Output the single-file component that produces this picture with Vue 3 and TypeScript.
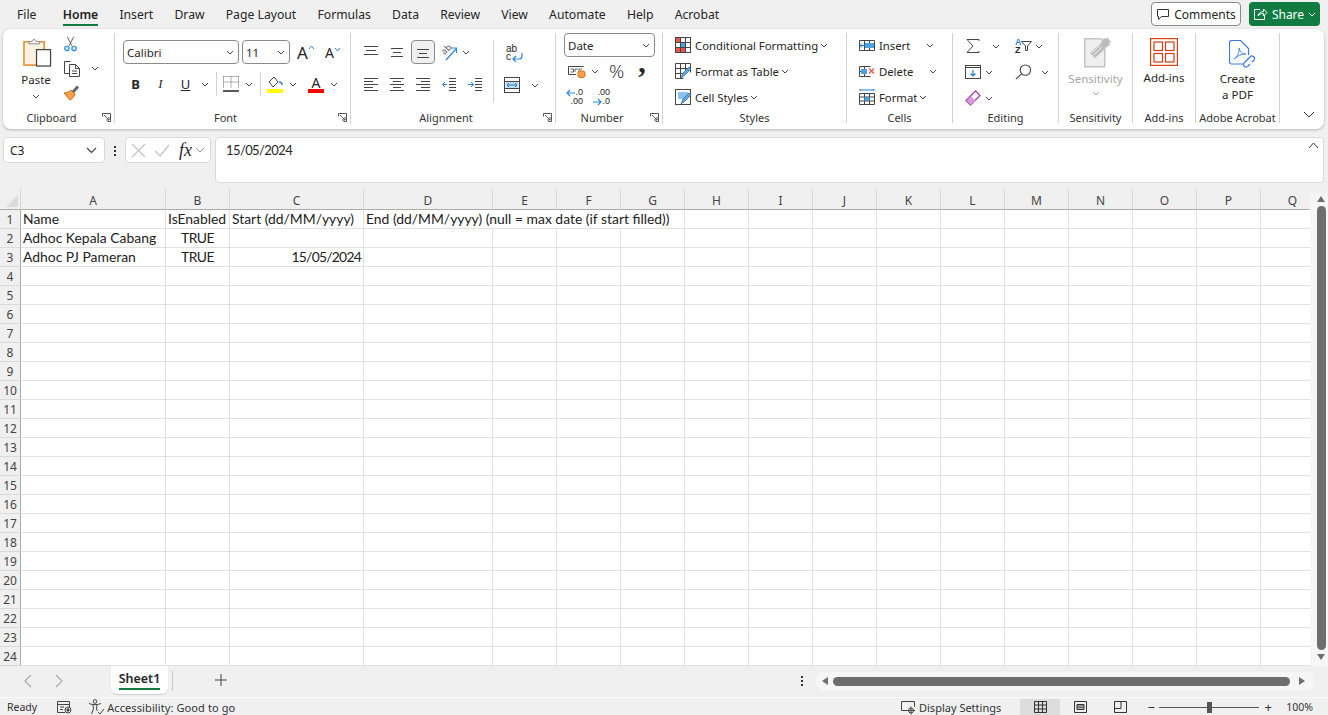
<script setup lang="ts">
const tabs = ["File", "Home", "Insert", "Draw", "Page Layout", "Formulas", "Data", "Review", "View", "Automate", "Help", "Acrobat"]

const columns = [
  { name: "A", width: 145 },
  { name: "B", width: 64 },
  { name: "C", width: 134 },
  { name: "D", width: 129 },
  ...["E", "F", "G", "H", "I", "J", "K", "L", "M", "N", "O", "P", "Q"].map((name) => ({ name, width: 64 })),
]

type Cell = { text: string; align?: "left" | "center" | "right"; span?: number }

const firstRows: Cell[][] = [
  [
    { text: "Name" },
    { text: "IsEnabled" },
    { text: "Start (dd/MM/yyyy)" },
    { text: "End (dd/MM/yyyy) (null = max date (if start filled))", span: 4 },
  ],
  [{ text: "Adhoc Kepala Cabang" }, { text: "TRUE", align: "center" }, { text: "" }, { text: "" }],
  [{ text: "Adhoc PJ Pameran" }, { text: "TRUE", align: "center" }, { text: "15/05/2024", align: "right" }, { text: "" }],
]

function rowCells(index: number): Cell[] {
  const given = firstRows[index] ?? []
  const used = given.reduce((sum, c) => sum + (c.span ?? 1), 0)
  return [...given, ...Array.from({ length: columns.length - used }, () => ({ text: "" }))]
}

const rows = Array.from({ length: 24 }, (_, i) => i)
const gridCols = ["21px", ...columns.map((c) => c.width + "px")].join(" ")
</script>

<template>
  <div class="app">
    <header class="tabbar">
      <nav class="tabs">
        <span v-for="t in tabs" :key="t" class="tab" :class="{ active: t === 'Home' }">{{ t }}</span>
      </nav>
      <div class="actions">
        <button class="comments">
          <svg width="14" height="14" viewBox="0 0 14 14" fill="none" stroke="#333"><path d="M1.5 2.5h11v7h-7l-3 3v-3h-1z" /></svg>
          Comments
        </button>
        <button class="share">
          <svg width="15" height="14" viewBox="0 0 15 14" fill="none" stroke="#fff"><path d="M7 2.5H1.5v10h10V8M5 9c.5-3 3-4.500 5.500-4.500V2l3.500 3.500L10.500 9V6.500C8 6.500 6 7.500 5 9z" /></svg>
          Share
          <svg class="chev white" viewBox="0 0 8 5"><path d="M1 1l3 3 3-3" /></svg>
        </button>
      </div>
    </header>

    <section class="ribbon">
      <!-- Clipboard -->
      <div class="group" style="width: 112px">
        <div class="body clip">
          <div class="paste">
            <svg class="paste-icon" width="29" height="29" viewBox="0 0 30 30">
              <rect x="1" y="4" width="21" height="24" fill="#fdf3e0" stroke="#e08a1e" stroke-width="1.500" />
              <path d="M6 6V3.500h3.500L11.500 1l2 2.500H17V6z" fill="#fff" stroke="#8a8a8a" />
              <rect x="14" y="12" width="14.500" height="17" fill="#fff" stroke="#444" stroke-width="1.300" />
            </svg>
            <span class="big-text">Paste</span>
            <svg class="chev" viewBox="0 0 8 5"><path d="M1 1l3 3 3-3" /></svg>
          </div>
          <div class="clip-col">
            <div class="row26">
              <svg width="15" height="16" viewBox="0 0 16 18" fill="none"><path d="M4.500 1l5 10M11.500 1l-5 10" stroke="#555" /><circle cx="4" cy="14" r="2.500" fill="#cfe6f8" stroke="#2b88d8" stroke-width="1.300" /><circle cx="12" cy="14" r="2.500" fill="#cfe6f8" stroke="#2b88d8" stroke-width="1.300" /></svg>
            </div>
            <div class="row26">
              <svg width="18" height="17" viewBox="0 0 18 17" fill="none" stroke="#444"><path d="M6.500 13.500h-5v-12h6" /><path d="M6.500 4.500h6l4 4v8h-10zM12.500 4.500v4h4M9 11h5M9 13.500h5" fill="#fff" /></svg>
              <svg class="chev chev-copy" viewBox="0 0 8 5"><path d="M1 1l3 3 3-3" /></svg>
            </div>
            <div class="row26">
              <svg width="18" height="16" viewBox="0 0 18 16"><path d="M1 8l6 7c2-1 4-3 5-6L8 5C6 7 3 8 1 8z" fill="#f6a04a" stroke="#d06e14" /><path d="M10 7l5-5.500" stroke="#666" stroke-width="3" /></svg>
            </div>
          </div>
        </div>
        <div class="label"><i /><span>Clipboard</span><svg class="launch" viewBox="0 0 9 9"><path d="M.5 3.500v-3h8v8h-3M2 2l5 5M7 4v3H4" /></svg></div>
      </div>

      <!-- Font -->
      <div class="group" style="width: 236px">
        <div class="body font">
          <div class="font-row">
            <div class="combo combo-font"><span>Calibri</span><svg class="chev" viewBox="0 0 8 5"><path d="M1 1l3 3 3-3" /></svg></div>
            <div class="combo combo-size"><span>11</span><svg class="chev" viewBox="0 0 8 5"><path d="M1 1l3 3 3-3" /></svg></div>
            <span class="grow">A<svg class="caret" viewBox="0 0 7 5"><path d="M1 4l2.500-3L6 4" /></svg></span>
            <span class="shrink">A<svg class="caret" viewBox="0 0 7 5"><path d="M1 1l2.500 3L6 1" /></svg></span>
          </div>
          <div class="font-row second">
            <b class="btn-b">B</b>
            <i class="btn-i">I</i>
            <u class="btn-u">U</u>
            <svg class="chev first" viewBox="0 0 8 5"><path d="M1 1l3 3 3-3" /></svg>
            <span class="vsep" />
            <svg width="16" height="16" viewBox="0 0 16 16" fill="none"><path d="M.5 .5h15M.5 .5v11M15.500 .5v11M.5 6h15M8 .5v11" stroke="#666" stroke-dasharray="1 1" /><path d="M0 15h16" stroke="#222" stroke-width="1.500" /></svg>
            <svg class="chev" viewBox="0 0 8 5"><path d="M1 1l3 3 3-3" /></svg>
            <span class="vsep" />
            <span class="color-btn">
              <svg width="16" height="13" viewBox="0 0 16 13" fill="none"><path d="M7 1L2 6l4 5 5-5z" stroke="#444" /><path d="M12 6c2 0 3 1 3 3" stroke="#2b88d8" stroke-width="1.500" /></svg>
              <span class="swatch yellow" />
            </span>
            <svg class="chev" viewBox="0 0 8 5"><path d="M1 1l3 3 3-3" /></svg>
            <span class="color-btn letter">A<span class="swatch red" /></span>
            <svg class="chev" viewBox="0 0 8 5"><path d="M1 1l3 3 3-3" /></svg>
          </div>
        </div>
        <div class="label"><i /><span>Font</span><svg class="launch" viewBox="0 0 9 9"><path d="M.5 3.500v-3h8v8h-3M2 2l5 5M7 4v3H4" /></svg></div>
      </div>

      <!-- Alignment -->
      <div class="group" style="width: 205px">
        <div class="body align">
          <div class="align-main">
            <div class="align-row top">
              <svg class="al" viewBox="0 0 14 14"><path d="M0 1.500h14M2 5.500h10M0 9.500h14" /></svg>
              <svg class="al" viewBox="0 0 14 14"><path d="M1 3.500h12M3 7.500h8M1 11.500h12" /></svg>
              <span class="pressed"><svg class="al" viewBox="0 0 14 14"><path d="M1 4.500h12M3 8.500h8M1 12.500h12" /></svg></span>
              <svg class="orient-icon" width="17" height="17" viewBox="0 0 17 17" fill="none"><text x="1" y="9" transform="rotate(-45 5 7)" class="orient">ab</text><path d="M5 16L15 5M10 4h5.500v5" stroke="#2b88d8" stroke-width="1.200" /></svg>
              <svg class="chev orient-chev" viewBox="0 0 8 5"><path d="M1 1l3 3 3-3" /></svg>
            </div>
            <div class="align-row">
              <svg class="al" viewBox="0 0 14 14"><path d="M0 1.500h14M0 4.500h9M0 7.500h14M0 10.500h9M0 13.500h14" /></svg>
              <svg class="al" viewBox="0 0 14 14"><path d="M0 1.500h14M3 4.500h8M0 7.500h14M3 10.500h8M0 13.500h14" /></svg>
              <svg class="al" viewBox="0 0 14 14"><path d="M0 1.500h14M5 4.500h9M0 7.500h14M5 10.500h9M0 13.500h14" /></svg>
              <svg class="al" viewBox="0 0 14 14"><path d="M7 1.500h7M7 4.500h7M7 7.500h7M7 10.500h7M7 13.500h7" /><path class="blue" d="M0 7.500h5M3 5L.5 7.500 3 10" /></svg>
              <svg class="al" viewBox="0 0 14 14"><path d="M7 1.500h7M7 4.500h7M7 7.500h7M7 10.500h7M7 13.500h7" /><path class="blue" d="M0 7.500h5M3 5l2.500 2.500L3 10" /></svg>
            </div>
          </div>
          <span class="vsep tall" />
          <div class="wrap-col">
            <div class="wrap-row">
              <span class="wrap-icon">
                <span class="wrap-ab">ab</span>
                <span class="wrap-c">c<svg width="11" height="9" viewBox="0 0 11 9" fill="none" stroke="#2b88d8" stroke-width="1.200"><path d="M10 0v3c0 2-1 3-3 3H1M4 3L1 6l3 3" /></svg></span>
              </span>
            </div>
            <div class="wrap-row merge">
              <svg width="16" height="16" viewBox="0 0 16 16" fill="none"><rect x=".5" y=".5" width="15" height="15" stroke="#444" /><rect x="1.500" y="4.500" width="13" height="7" fill="#bfe0f7" /><path d="M.5 4.500h15M.5 11.500h15" stroke="#444" /><path d="M3 8h10M5 6L3 8l2 2M11 6l2 2-2 2" stroke="#1f7fd0" /></svg>
              <svg class="chev" viewBox="0 0 8 5"><path d="M1 1l3 3 3-3" /></svg>
            </div>
          </div>
        </div>
        <div class="label"><i /><span>Alignment</span><svg class="launch" viewBox="0 0 9 9"><path d="M.5 3.500v-3h8v8h-3M2 2l5 5M7 4v3H4" /></svg></div>
      </div>

      <!-- Number -->
      <div class="group" style="width: 107px">
        <div class="body number">
          <div class="combo combo-num"><span>Date</span><svg class="chev" viewBox="0 0 8 5"><path d="M1 1l3 3 3-3" /></svg></div>
          <div class="num-row">
            <svg width="18" height="14" viewBox="0 0 18 14" fill="none"><path d="M8 10.500H.5v-8h15" stroke="#444" /><path d="M2.500 5h3v3h-3M7 8V5h3M11 8V5h3" stroke="#444" stroke-width=".8" /><rect x="10" y="7" width="7" height="6.500" rx="2" fill="#f5a04a" stroke="#d06e14" /></svg>
            <svg class="chev" viewBox="0 0 8 5"><path d="M1 1l3 3 3-3" /></svg>
            <span class="pct">%</span>
            <span class="comma">,</span>
          </div>
          <div class="num-row dec">
            <span class="dec-icon"><span><svg width="9" height="8" viewBox="0 0 9 8" fill="none" stroke="#2b88d8" stroke-width="1.200"><path d="M9 4H1M4 1L1 4l3 3" /></svg>.0</span><span class="dec-low">.00</span></span>
            <span class="dec-icon"><span class="dec-low">.00</span><span><svg width="9" height="8" viewBox="0 0 9 8" fill="none" stroke="#2b88d8" stroke-width="1.200"><path d="M0 4h8M5 1l3 3-3 3" /></svg>.0</span></span>
          </div>
        </div>
        <div class="label"><i /><span>Number</span><svg class="launch" viewBox="0 0 9 9"><path d="M.5 3.500v-3h8v8h-3M2 2l5 5M7 4v3H4" /></svg></div>
      </div>

      <!-- Styles -->
      <div class="group" style="width: 184px">
        <div class="body stack styles">
          <div class="item">
            <svg class="i16" viewBox="0 0 16 16" fill="none"><rect x=".5" y=".5" width="15" height="15" stroke="#444" /><rect x="1" y="1" width="5" height="4.500" fill="#ef5350" /><rect x="1" y="10.500" width="10" height="4.500" fill="#ef5350" /><rect x="5.500" y="5.500" width="5" height="5" fill="#4aa3e0" /><path d="M5.500 .5v15M10.500 .5v15M.5 5.500h15M.5 10.500h15" stroke="#444" /></svg>
            <span>Conditional Formatting</span><svg class="chev" viewBox="0 0 8 5"><path d="M1 1l3 3 3-3" /></svg>
          </div>
          <div class="item">
            <svg class="i16" viewBox="0 0 16 16" fill="none"><path d="M.5 .5h15v9M.5 .5v15h8M.5 5.500h15M5.500 .5v15M10.500 .5v7M.5 10.500h7" stroke="#444" /><path d="M6 15l2-5 6-6 2 2-6 6z" fill="#5ea9e6" stroke="#3a6ea5" stroke-width=".8" /></svg>
            <span>Format as Table</span><svg class="chev" viewBox="0 0 8 5"><path d="M1 1l3 3 3-3" /></svg>
          </div>
          <div class="item">
            <svg class="i16" viewBox="0 0 16 16" fill="none"><rect x=".5" y=".5" width="15" height="15" stroke="#444" /><path d="M3 3h10v7H3z" fill="#8cc3ee" /><path d="M6 15l2-5 6-6 2 2-6 6z" fill="#5ea9e6" stroke="#3a6ea5" stroke-width=".8" /></svg>
            <span>Cell Styles</span><svg class="chev" viewBox="0 0 8 5"><path d="M1 1l3 3 3-3" /></svg>
          </div>
        </div>
        <div class="label center"><span>Styles</span></div>
      </div>

      <!-- Cells -->
      <div class="group" style="width: 106px">
        <div class="body stack cells">
          <div class="item">
            <svg class="i16" viewBox="0 0 16 16" fill="none"><path d="M.5 3.500h15v10H.5zM.5 8.500h15M5.500 3.500v10M10.500 3.500v10" stroke="#444" /><rect x="6" y="6" width="9" height="5" fill="#4aa3e0" /><path d="M6 8.500H1M3 6.500l-2 2 2 2" stroke="#1f7fd0" /></svg>
            <span>Insert</span><svg class="chev chev-far" viewBox="0 0 8 5"><path d="M1 1l3 3 3-3" /></svg>
          </div>
          <div class="item">
            <svg class="i16" viewBox="0 0 16 16" fill="none"><path d="M.5 3.500h11M.5 13.500h11M.5 3.500v10M.5 8.500h4M5.500 3.500v10" stroke="#444" /><rect x="2" y="6" width="6" height="5" fill="#4aa3e0" /><path d="M10 5.500l5 5M15 5.500l-5 5" stroke="#e8534f" stroke-width="1.300" /></svg>
            <span>Delete</span><svg class="chev chev-far" viewBox="0 0 8 5"><path d="M1 1l3 3 3-3" /></svg>
          </div>
          <div class="item">
            <svg class="i16" viewBox="0 0 16 16" fill="none"><path d="M.5 4.500h15v11H.5zM5.500 4.500v11M10.500 4.500v11M.5 8h15M.5 12h15" stroke="#444" /><rect x="5.500" y="8" width="5" height="4" fill="#4aa3e0" /><path d="M1 1h14M1 0v2M15 0v2" stroke="#1f7fd0" /></svg>
            <span>Format</span><svg class="chev" viewBox="0 0 8 5"><path d="M1 1l3 3 3-3" /></svg>
          </div>
        </div>
        <div class="label center"><span>Cells</span></div>
      </div>

      <!-- Editing -->
      <div class="group" style="width: 106px">
        <div class="body editing">
          <div class="edit-col">
            <div class="edit-row">
              <svg class="i16" viewBox="0 0 16 16" fill="none" stroke="#444"><path d="M14 3V1.500H2L8 8l-6 6.500h12V13" /></svg>
              <svg class="chev sum-chev" viewBox="0 0 8 5"><path d="M1 1l3 3 3-3" /></svg>
            </div>
            <div class="edit-row">
              <svg class="i16" viewBox="0 0 16 16" fill="none"><rect x=".5" y="1.500" width="15" height="13" stroke="#444" /><path d="M.5 3.500h15" stroke="#444" /><path d="M8 6v6M5.500 9.500L8 12l2.500-2.500" stroke="#1f7fd0" stroke-width="1.200" /></svg>
              <svg class="chev" viewBox="0 0 8 5"><path d="M1 1l3 3 3-3" /></svg>
            </div>
            <div class="edit-row">
              <svg class="i16" viewBox="0 0 16 16"><path d="M1 10.500L10.500 1 15 5.500 5.500 15z" fill="#fff" stroke="#a144a8" stroke-width="1.300" /><path d="M1.500 10.500L6 6l4.500 4.500-5 4.500z" fill="#d59ad9" /></svg>
              <svg class="chev" viewBox="0 0 8 5"><path d="M1 1l3 3 3-3" /></svg>
            </div>
          </div>
          <div class="edit-col second">
            <div class="edit-row sort">
              <span class="sort-icon"><span class="sort-a">A</span><span>Z</span></span>
              <svg width="11" height="10" viewBox="0 0 11 10" fill="none" stroke="#444"><path d="M.5 .5h10L6.500 5v4.500h-2V5z" /></svg>
              <svg class="chev" viewBox="0 0 8 5"><path d="M1 1l3 3 3-3" /></svg>
            </div>
            <div class="edit-row">
              <svg width="17" height="16" viewBox="0 0 18 17" fill="none" stroke="#444" stroke-width="1.200"><circle cx="11" cy="6.500" r="5.500" /><path d="M7 10.500L1 16" /></svg>
              <svg class="chev" viewBox="0 0 8 5"><path d="M1 1l3 3 3-3" /></svg>
            </div>
          </div>
        </div>
        <div class="label center"><span>Editing</span></div>
      </div>

      <!-- Sensitivity -->
      <div class="group" style="width: 74px">
        <div class="body big muted">
          <svg class="sens-icon" width="28" height="32" viewBox="0 0 28 32"><path d="M.75 2.750h16l4 4v24h-20z" fill="#efefef" stroke="#c4c4c4" stroke-width="1.500" /><path d="M6 17L17 7l5 5-11 10z" fill="#bdbdbd" /><path d="M8 17l8-8M10 19l8-8" stroke="#efefef" /><path d="M17 7l3-5 2 1 1-2 4 5-2 1 1 2-5 3z" fill="#bdbdbd" /></svg>
          <span class="big-text">Sensitivity</span>
          <svg class="chev" viewBox="0 0 8 5"><path d="M1 1l3 3 3-3" /></svg>
        </div>
        <div class="label center"><span>Sensitivity</span></div>
      </div>

      <!-- Add-ins -->
      <div class="group" style="width: 63px">
        <div class="body big addins">
          <svg width="28" height="28" viewBox="0 0 28 28" fill="none" stroke="#d13e12" stroke-width="1.200"><rect x=".6" y=".6" width="26.800" height="26.800" /><rect x="4" y="4" width="8.500" height="8.500" /><rect x="15.500" y="4" width="8.500" height="8.500" /><rect x="4" y="15.500" width="8.500" height="8.500" /><rect x="15.500" y="15.500" width="8.500" height="8.500" /></svg>
          <span class="big-text">Add-ins</span>
        </div>
        <div class="label center"><span>Add-ins</span></div>
      </div>

      <!-- Adobe Acrobat -->
      <div class="group" style="width: 84px">
        <div class="body big acrobat">
          <svg width="26" height="28" viewBox="0 0 26 28" fill="none" stroke="#3b78e7" stroke-width="1.200"><path d="M14 24H2.500a2 2 0 0 1-2-2V2.500a2 2 0 0 1 2-2h9l8 8V15" /><path d="M5 19c3-1 6-8 5-11 1 4 3 6 7 6-3 0-8 1-12 5z" stroke-width=".9" /><path d="M15 23l6-6a2.500 2.500 0 0 1 4 3l-2 2M19 19l-4 4a2.500 2.500 0 0 0 4 3l2-2" /></svg>
          <span class="big-text create">Create<br />a PDF</span>
        </div>
        <div class="label center"><span>Adobe Acrobat</span></div>
      </div>

      <div class="collapse">
        <svg width="12" height="7" viewBox="0 0 12 7" fill="none" stroke="#333"><path d="M1 1l5 5 5-5" /></svg>
      </div>
    </section>

    <section class="formula">
      <div class="namebox"><span>C3</span><svg width="11" height="7" viewBox="0 0 11 7" fill="none" stroke="#444" stroke-width="1.200"><path d="M1 1l4.500 4.500L10 1" /></svg></div>
      <div class="dots"><span /><span /><span /></div>
      <div class="fx-btns">
        <svg width="15" height="15" viewBox="0 0 15 15" fill="none" stroke="#c4c4c4" stroke-width="1.200"><path d="M1 1l13 13M14 1L1 14" /></svg>
        <svg width="16" height="13" viewBox="0 0 16 13" fill="none" stroke="#c4c4c4" stroke-width="1.200"><path d="M1 7l5 5L15 1" /></svg>
        <em class="fx">fx</em>
        <svg width="10" height="6" viewBox="0 0 10 6" fill="none" stroke="#999"><path d="M1 1l4 4 4-4" /></svg>
      </div>
      <div class="formula-input">
        <span class="formula-value">15/05/2024</span>
        <svg width="11" height="7" viewBox="0 0 11 7" fill="none" stroke="#333"><path d="M1 6l4.500-5L10 6" /></svg>
      </div>
    </section>

    <section class="sheet">
      <div class="grid-clip">
        <div class="grid" :style="{ gridTemplateColumns: gridCols }">
          <div class="corner"><span class="tri" /></div>
          <div v-for="c in columns" :key="c.name" class="col-head">{{ c.name }}</div>
          <template v-for="r in rows" :key="r">
            <div class="row-head">{{ r + 1 }}</div>
            <div
              v-for="(cell, ci) in rowCells(r)"
              :key="ci"
              class="cell"
              :class="cell.align"
              :style="cell.span ? { gridColumn: 'span ' + cell.span } : undefined"
            >{{ cell.text }}</div>
          </template>
        </div>
      </div>
      <div class="vscroll">
        <span class="arrow up" />
        <span class="vthumb" />
        <span class="arrow down" />
      </div>
    </section>

    <section class="sheetbar">
      <div class="nav">
        <svg width="9" height="14" viewBox="0 0 9 14" fill="none" stroke="#aaa" stroke-width="1.200"><path d="M8 1L2 7l6 6" /></svg>
        <svg width="9" height="14" viewBox="0 0 9 14" fill="none" stroke="#aaa" stroke-width="1.200"><path d="M1 1l6 6-6 6" /></svg>
      </div>
      <div class="sheet-tab"><span>Sheet1</span></div>
      <span class="tab-sep" />
      <svg class="plus" width="12" height="12" viewBox="0 0 12 12" stroke="#444"><path d="M6 0v12M0 6h12" /></svg>
      <div class="dots bar-dots"><span /><span /><span /></div>
      <div class="hscroll">
        <span class="arrow left" />
        <span class="hthumb" />
        <span class="arrow right" />
      </div>
    </section>

    <footer class="status">
      <span class="ready">Ready</span>
      <svg class="macro" width="15" height="14" viewBox="0 0 15 14" fill="none" stroke="#444"><path d="M8 12.500H.5v-11h12V7M.5 4.500h12M3 7h4M3 9.500h3" /><circle cx="11" cy="10" r="3" /><circle cx="11" cy="10" r="1.200" fill="#444" /></svg>
      <svg class="access" width="17" height="16" viewBox="0 0 17 16" fill="none" stroke="#444"><circle cx="7" cy="2.500" r="1.800" /><path d="M1 4.500c3 1.500 9 1.500 12 0M5 6l.5 4-2 5M9 6l-.5 4 1 2M10 13l2 2 4-5" /></svg>
      <span class="access-text">Accessibility: Good to go</span>
      <div class="status-right">
        <svg width="15" height="15" viewBox="0 0 15 15" fill="none" stroke="#444"><path d="M6 10.500H.5v-9h13V7" /><circle cx="10" cy="10.500" r="2.500" /><path d="M10 6.500v8M6 10.500h8" /></svg>
        <span class="display">Display Settings</span>
        <span class="view active">
          <svg width="13" height="12" viewBox="0 0 13 12" fill="none" stroke="#333"><path d="M.5 .5h12v11H.5zM.5 4h12M.5 8h12M4.500 .5v11M8.500 .5v11" /></svg>
        </span>
        <span class="view">
          <svg width="13" height="12" viewBox="0 0 13 12" fill="none" stroke="#333"><path d="M.5 .5h12v11H.5zM3 3.500h7v5H3zM3 5h7M3 6.800h7" /></svg>
        </span>
        <span class="view">
          <svg width="13" height="12" viewBox="0 0 13 12" fill="none" stroke="#333"><path d="M.5 .5h12v11H.5zM.5 7.500h6.500V.5" /></svg>
        </span>
        <span class="zoom-sign">−</span>
        <span class="slider"><span class="knob" /></span>
        <span class="zoom-sign plus-sign">+</span>
        <span class="pct-text">100%</span>
      </div>
    </footer>
  </div>
</template>

<style>
html,
body {
  margin: 0;
  overflow: hidden;
}
</style>

<style scoped>
.app {
  width: 1328px;
  height: 715px;
  background: #f0f0f0;
  color: #262626;
  font-family: "Noto Sans", "Open Sans", sans-serif;
  font-size: 11.5px;
  display: flex;
  flex-direction: column;
  overflow: hidden;
}
svg {
  flex: none;
  display: block;
}
.chev {
  width: 8px;
  height: 5px;
  fill: none;
  stroke: #444;
}
.chev.white {
  stroke: #fff;
}

/* tab bar */
.tabbar {
  height: 29px;
  display: flex;
  justify-content: space-between;
  flex: none;
}
.tabs {
  display: flex;
  padding-left: 17px;
  gap: 21.2px;
  align-items: center;
  font-size: 12.2px;
  height: 29px;
}
.tab {
  position: relative;
  line-height: 29px;
}
.tab:first-child {
  margin-right: 5px;
}
.tab.active {
  font-weight: 600;
  color: #222;
}
.tab.active::after {
  content: "";
  position: absolute;
  left: 0;
  right: 0;
  bottom: 3px;
  height: 2px;
  background: #107c41;
}
.actions {
  display: flex;
  padding: 2px 8px 0 0;
  gap: 8px;
}
.comments,
.share {
  height: 24px;
  font: inherit;
  font-size: 12px;
  display: flex;
  align-items: center;
  justify-content: center;
  border-radius: 4px;
  gap: 4px;
}
.comments {
  width: 90px;
  background: #fff;
  border: 1px solid #8a8a8a;
  color: #262626;
  padding: 0;
}
.share {
  width: 71px;
  background: #107c41;
  border: 0;
  color: #fff;
  padding: 0;
}

/* ribbon */
.ribbon {
  height: 100px;
  margin: 0 4px 0 3px;
  background: #fff;
  border-radius: 8px;
  box-shadow: 0 1px 3px rgba(0, 0, 0, 0.25);
  display: flex;
  flex: none;
  padding-top: 4px;
  box-sizing: border-box;
}
.group {
  height: 90px;
  flex: none;
  box-sizing: border-box;
  border-right: 1px solid #d2d2d2;
  display: flex;
  flex-direction: column;
}
.body {
  flex: 1;
  min-height: 0;
}
.label {
  height: 18px;
  box-sizing: border-box;
  padding: 7px 14px 0 0;
  display: grid;
  grid-template-columns: 1fr auto 1fr;
  align-items: center;
  flex: none;
  font-size: 11px;
  line-height: 11px;
  color: #333;
}
.label.center {
  display: flex;
  justify-content: center;
  padding-right: 0;
}
.label i {
  display: block;
}
.launch {
  width: 9px;
  height: 9px;
  justify-self: end;
  margin-right: -11px;
  fill: none;
  stroke: #555;
}
.big-text {
  font-size: 11.5px;
}
.stack {
  display: flex;
  flex-direction: column;
  padding-left: 12px;
  margin-top: -1px;
}
.item {
  height: 26px;
  display: flex;
  align-items: center;
  gap: 4px;
  font-size: 11.3px;
  flex: none;
}
.item > .chev {
  margin-left: -2px;
}
.item > .chev-far {
  margin-left: 12px;
}
.i16 {
  width: 16px;
  height: 16px;
}

/* clipboard */
.clip {
  display: flex;
  padding-left: 18px;
}
.paste {
  width: 30px;
  display: flex;
  flex-direction: column;
  align-items: center;
  padding-top: 5px;
}
.paste-icon {
  margin-left: 3px;
}
.paste .big-text {
  margin-top: 5px;
  line-height: 16px;
}
.paste .chev {
  margin-top: 6px;
}
.clip-col {
  margin: -1px 0 0 12px;
  display: flex;
  flex-direction: column;
}
.row26 {
  height: 26px;
  display: flex;
  align-items: center;
}
.chev-copy {
  margin-left: 10px;
}

/* font */
.font {
  padding-left: 8px;
}
.font-row {
  display: flex;
  align-items: center;
  height: 24px;
  margin-top: 7px;
}
.font-row.second {
  margin-top: 8px;
}
.combo {
  box-sizing: border-box;
  height: 24px;
  border: 1px solid #8a8a8a;
  border-radius: 4px;
  display: flex;
  align-items: center;
  justify-content: space-between;
  padding: 0 4px 0 3px;
  font-size: 11.5px;
}
.combo-font {
  width: 116px;
}
.combo-size {
  width: 48px;
  margin-left: 3px;
}
.grow {
  font-size: 17px;
  margin-left: 7px;
  display: flex;
  width: 28px;
}
.shrink {
  font-size: 14px;
  display: flex;
  width: 17px;
}
.caret {
  width: 7px;
  height: 5px;
  fill: none;
  stroke: #2b88d8;
  margin-top: 4px;
}
.btn-b,
.btn-i,
.btn-u {
  font-size: 13px;
  width: 25px;
  text-align: center;
}
.btn-i {
  font-family: "Liberation Serif", serif;
}
.second .chev {
  margin: 0 7px 0 6px;
}
.second .chev.first {
  margin-left: 3px;
}
.vsep {
  width: 1px;
  height: 24px;
  background: #d2d2d2;
  margin: 0 6px 0 0;
  flex: none;
}
.color-btn {
  width: 16px;
  display: flex;
  flex-direction: column;
  align-items: center;
}
.color-btn.letter {
  font-size: 14px;
  line-height: 13px;
  margin-left: 4px;
}
.swatch {
  width: 16px;
  height: 4px;
  display: block;
}
.yellow {
  background: #ffff00;
}
.red {
  background: #ff0000;
}

/* alignment */
.align {
  display: flex;
  padding-left: 13px;
}
.align-main {
  width: 129px;
}
.align-row {
  display: flex;
  align-items: center;
  gap: 12px;
  height: 24px;
  margin-top: 8px;
}
.align-row.top {
  margin-top: 7px;
}
.al {
  width: 14px;
  height: 14px;
  fill: none;
  stroke: #444;
}
.al .blue {
  stroke: #2b88d8;
}
.pressed {
  width: 24px;
  height: 24px;
  box-sizing: border-box;
  border: 1px solid #8a8a8a;
  border-radius: 4px;
  background: #f0f0f0;
  display: flex;
  align-items: center;
  justify-content: center;
  margin: 0 -6px 0 -5px;
}
.orient-icon {
  overflow: visible;
}
.orient {
  font-size: 9px;
  fill: #555;
  font-family: "Noto Sans", sans-serif;
}
.orient-chev {
  margin-left: -8px;
}
.vsep.tall {
  height: 62px;
  margin: 7px 0 0 0;
}
.wrap-col {
  padding-left: 10px;
}
.wrap-row {
  display: flex;
  align-items: center;
  height: 30px;
  margin-top: 5px;
}
.wrap-row.merge {
  gap: 11px;
  margin-top: 2px;
}
.wrap-icon {
  display: flex;
  flex-direction: column;
  font-family: "Liberation Sans", sans-serif;
  font-size: 10px;
  line-height: 8px;
  padding-left: 2px;
}
.wrap-c {
  display: flex;
  align-items: center;
  gap: 1px;
}

/* number */
.number {
  padding-left: 8px;
}
.combo-num {
  width: 91px;
}
.num-row {
  display: flex;
  align-items: center;
  height: 26px;
  margin-top: 1px;
  padding-left: 4px;
}
.num-row .chev {
  margin-left: 5px;
}
.pct {
  font-family: "Open Sans", sans-serif;
  font-weight: 300;
  font-size: 19px;
  margin-left: 10px;
}
.comma {
  font-family: "Liberation Serif", serif;
  font-size: 30px;
  line-height: 12px;
  font-weight: 700;
  margin: -18px 0 0 14px;
}
.num-row.dec {
  margin-top: 0;
  gap: 11px;
  padding-left: 3px;
}
.dec-icon {
  display: flex;
  flex-direction: column;
  font-family: "Liberation Sans", sans-serif;
  font-size: 9px;
  line-height: 9px;
  align-items: flex-end;
  width: 16px;
}
.dec-icon span {
  display: flex;
  align-items: center;
}

/* editing */
.editing {
  display: flex;
  padding-left: 12px;
}
.edit-col {
  width: 50px;
}
.edit-col.second {
  width: 36px;
}
.edit-row {
  display: flex;
  align-items: center;
  height: 26px;
  gap: 3px;
}
.edit-col:first-child .edit-row {
  gap: 4px;
}
.sum-chev {
  margin-left: 7px;
}
.sort {
  gap: 0;
}
.sort .chev {
  margin-left: 3px;
}
.sort-icon {
  width: 6px;
  display: flex;
  flex-direction: column;
  font-family: "Liberation Sans", sans-serif;
  font-size: 9px;
  line-height: 8px;
  font-weight: 700;
}
.sort-a {
  color: #2b88d8;
}

/* big buttons */
.big {
  display: flex;
  flex-direction: column;
  align-items: center;
  padding-top: 3px;
}
.big .big-text {
  margin-top: 3px;
  line-height: 16px;
  text-align: center;
}
.big .chev {
  margin-top: 4px;
}
.muted {
  color: #a6a6a6;
}
.muted .chev {
  stroke: #a6a6a6;
}
.sens-icon {
  margin-left: 5px;
}
.addins {
  padding-top: 5px;
}
.addins .big-text {
  margin-top: 4px;
}
.acrobat {
  padding-top: 7px;
}
.acrobat svg {
  margin-left: 8px;
}
.collapse {
  flex: 1;
  display: flex;
  justify-content: flex-end;
  align-items: flex-end;
  padding: 0 9px 11px 0;
}

/* formula bar */
.formula {
  height: 46px;
  margin-top: 8px;
  display: flex;
  flex: none;
  padding: 0 4px 0 3px;
}
.namebox {
  width: 102px;
  height: 26px;
  box-sizing: border-box;
  background: #fff;
  border: 1px solid #d9d9d9;
  border-radius: 4px;
  display: flex;
  align-items: center;
  justify-content: space-between;
  padding: 0 7px 0 6px;
  font-size: 12px;
}
.dots {
  display: flex;
  flex-direction: column;
  gap: 2px;
  width: 2px;
}
.dots span {
  width: 2px;
  height: 2px;
  background: #333;
}
.formula > .dots {
  margin: 9px 9px 0 9px;
}
.fx-btns {
  width: 86px;
  height: 26px;
  box-sizing: border-box;
  background: #fff;
  border: 1px solid #d9d9d9;
  border-radius: 4px;
  display: flex;
  align-items: center;
  padding-left: 5px;
  gap: 8px;
}
.fx {
  font-family: "Liberation Serif", serif;
  font-size: 18px;
  font-weight: 400;
  margin: 0 -5px 0 1px;
}
.formula-input {
  flex: 1;
  margin-left: 4px;
  height: 46px;
  box-sizing: border-box;
  background: #fff;
  border: 1px solid #d9d9d9;
  border-radius: 4px;
  display: flex;
  justify-content: space-between;
  padding: 4px 4px 0 10px;
}
.formula-value {
  font-family: Lato, "Noto Sans", sans-serif;
  font-size: 13px;
  letter-spacing: -0.6px;
  line-height: 16px;
}

/* sheet */
.sheet {
  height: 477px;
  margin-top: 6px;
  display: flex;
  flex: none;
}
.grid-clip {
  width: 1310px;
  flex: none;
  overflow: hidden;
  background: #fff;
}
.grid {
  display: grid;
  grid-template-rows: 21px repeat(24, 19px);
  width: max-content;
  font-family: Lato, "Noto Sans", sans-serif;
  font-size: 13.9px;
  color: #222;
}
.corner,
.col-head {
  background: #f0f0f0;
  border-bottom: 1px solid #ababab;
  box-sizing: border-box;
}
.corner {
  position: relative;
  border-right: 1px solid #d6d6d6;
}
.tri {
  position: absolute;
  right: 2px;
  bottom: 2px;
  border-style: solid;
  border-width: 0 0 12px 12px;
  border-color: transparent transparent #dcdcdc transparent;
}
.col-head {
  font-family: "Noto Sans", sans-serif;
  font-size: 12px;
  color: #444;
  text-align: center;
  line-height: 23px;
  border-right: 1px solid #d9d9d9;
}
.row-head {
  background: #f0f0f0;
  border-right: 1px solid #ababab;
  border-bottom: 1px solid #d9d9d9;
  box-sizing: border-box;
  font-family: "Noto Sans", sans-serif;
  font-size: 12px;
  color: #444;
  text-align: center;
  line-height: 19px;
}
.cell {
  box-sizing: border-box;
  border-right: 1px solid #e1e1e1;
  border-bottom: 1px solid #e1e1e1;
  line-height: 18px;
  padding: 0 2px;
  white-space: nowrap;
  overflow: hidden;
}
.cell.center {
  text-align: center;
  letter-spacing: -0.5px;
}
.cell.right {
  text-align: right;
  letter-spacing: -0.75px;
}
.vscroll {
  flex: 1;
  display: flex;
  flex-direction: column;
  align-items: center;
  padding: 7px 0 2px 4px;
  background: linear-gradient(#f0f0f0, #f6f6f6 8px);
  border-radius: 8px 8px 0 0;
}
.vthumb {
  width: 9px;
  height: 444px;
  margin: 4px 0;
  background: #6e6e6e;
  border-radius: 5px;
  flex: none;
}
.arrow {
  display: block;
  width: 0;
  height: 0;
  border-style: solid;
  flex: none;
}
.arrow.up {
  border-width: 0 4.500px 6px;
  border-color: transparent transparent #6e6e6e;
}
.arrow.down {
  border-width: 6px 4.500px 0;
  border-color: #6e6e6e transparent transparent;
}
.arrow.left {
  border-width: 4.500px 6px 4.500px 0;
  border-color: transparent #6e6e6e transparent transparent;
}
.arrow.right {
  border-width: 4.500px 0 4.500px 6px;
  border-color: transparent transparent transparent #6e6e6e;
}

/* sheet bar */
.sheetbar {
  height: 31px;
  display: flex;
  align-items: flex-start;
  flex: none;
}
.nav {
  width: 111px;
  height: 29px;
  box-sizing: border-box;
  display: flex;
  align-items: center;
  gap: 23px;
  padding-left: 23px;
}
.sheet-tab {
  width: 57px;
  height: 28px;
  background: #fff;
  border-radius: 0 0 6px 6px;
  box-shadow: 0 1px 1px rgba(0, 0, 0, 0.15);
  display: flex;
  justify-content: center;
}
.sheet-tab span {
  font-size: 12.5px;
  font-weight: 600;
  line-height: 25px;
  height: 22px;
  border-bottom: 2px solid #107c41;
}
.tab-sep {
  width: 1px;
  height: 20px;
  background: #c8c8c8;
  margin: 5px 0 0 4px;
}
.plus {
  margin: 8px 0 0 42px;
}
.bar-dots {
  margin: 10px 0 0 574px;
}
.hscroll {
  width: 498px;
  height: 18px;
  margin: 6px 0 0 13px;
  background: #f6f6f6;
  border-radius: 8px;
  display: flex;
  align-items: center;
  padding: 0 6px;
  box-sizing: border-box;
}
.hthumb {
  width: 457px;
  height: 9px;
  margin: 0 9px 0 5px;
  border-radius: 5px;
  background: #6e6e6e;
}

/* status bar */
.status {
  height: 18px;
  flex: none;
  display: flex;
  align-items: center;
  border-top: 1px solid #fafafa;
  box-sizing: border-box;
  font-size: 11px;
  color: #333;
  padding: 1px 0 0 7px;
}
.ready {
  font-size: 10.5px;
}
.macro {
  margin-left: 20px;
}
.access {
  margin-left: 16px;
}
.access-text {
  margin-left: 2px;
  letter-spacing: 0.1px;
}
.status-right {
  margin-left: auto;
  display: flex;
  align-items: center;
  height: 17px;
  padding-right: 15px;
}
.display {
  margin: 0 19px 0 3px;
}
.view {
  width: 40px;
  height: 17px;
  display: flex;
  align-items: center;
  justify-content: center;
}
.view.active {
  background: #dcdcdc;
}
.zoom-sign {
  width: 12px;
  text-align: center;
  font-size: 13px;
  margin-left: 5px;
}
.zoom-sign.plus-sign {
  margin-left: 3px;
}
.slider {
  width: 100px;
  height: 1px;
  background: #555;
  margin: 0 0 0 2px;
  display: flex;
  justify-content: center;
  align-items: center;
  flex: none;
}
.knob {
  width: 5px;
  height: 11px;
  background: #555;
  flex: none;
}
.pct-text {
  margin-left: 12px;
  font-size: 10.5px;
}
</style>
